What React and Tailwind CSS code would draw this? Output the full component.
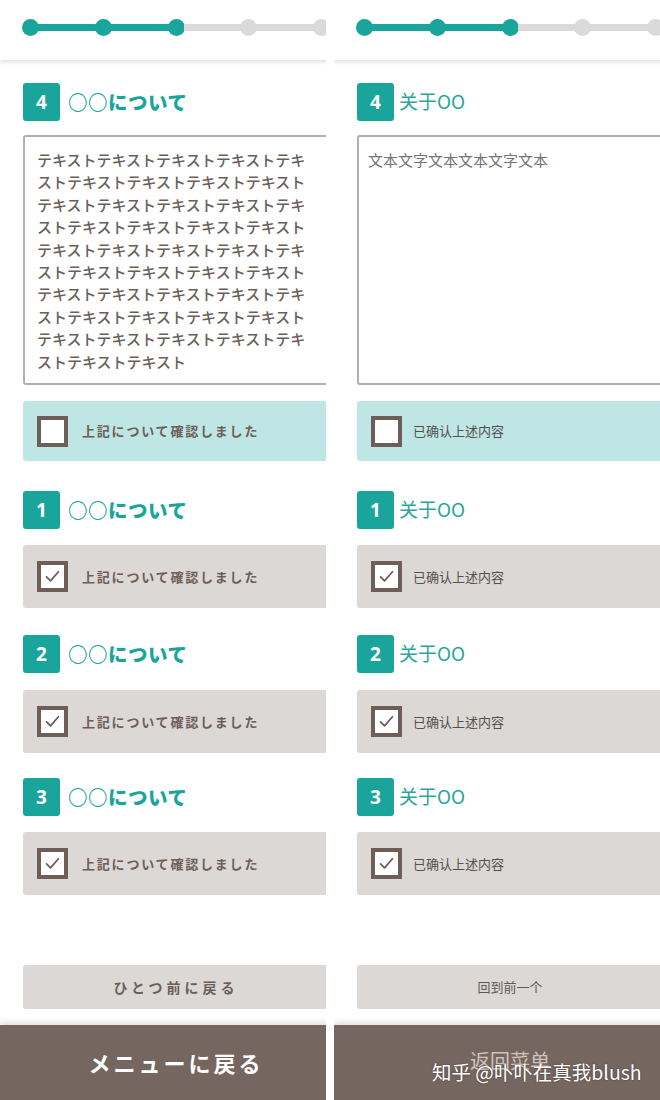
import React from "react";

const JA = {
  font: "font-['Noto_Sans_CJK_JP',sans-serif]",
  title: "○○について",
  body: "テキスト".repeat(43),
  confirm: "上記について確認しました",
  back: "ひとつ前に戻る",
  menu: "メニューに戻る",
};

const ZH = {
  font: "font-['Noto_Sans_CJK_SC',sans-serif]",
  title: "关于OO",
  body: "文本文字文本文本文字文本",
  confirm: "已确认上述内容",
  back: "回到前一个",
  menu: "返回菜单",
};

const Dot = ({ on }) => (
  <div className={`w-[17px] h-[17px] rounded-full shrink-0 ${on ? "bg-[#1aa59c]" : "bg-[#dadada]"}`} />
);

const Seg = ({ on }) => (
  <div className={`flex-1 h-[7px] -mx-px ${on ? "bg-[#1aa59c]" : "bg-[#dadada]"}`} />
);

const Progress = () => (
  <div className="flex items-center">
    <Dot on />
    <Seg on />
    <Dot on />
    <Seg on />
    <Dot on />
    <Seg />
    <Dot />
    <Seg />
    <Dot />
  </div>
);

const Heading = ({ num, text, ja }) => (
  <div className="flex items-center">
    <div className="w-[37px] h-[38px] rounded-[3px] bg-[#1aa59c] flex items-center justify-center text-white text-[19px] font-bold font-['Open_Sans',sans-serif]">
      {num}
    </div>
    {ja ? (
      <span className="ml-[8px] text-[19.5px] font-black tracking-[0.5px] text-[#1aa59c] leading-none">{text}</span>
    ) : (
      <span className="ml-[5px] -mt-[3px] text-[19px] text-[#2aa69c] leading-none">{text}</span>
    )}
  </div>
);

const Checkbox = ({ checked }) => (
  <div className="w-[31px] h-[31px] shrink-0 border-[4px] border-[#6e5e58] bg-white flex items-center justify-center">
    {checked && (
      <svg viewBox="0 0 24 24" className="w-[19px] h-[19px]">
        <path d="M4.5 12.5l5 5L19.5 6" stroke="#6e5e58" strokeWidth="2.2" fill="none" strokeLinecap="round" strokeLinejoin="round" />
      </svg>
    )}
  </div>
);

const ConfirmRow = ({ checked, label, ja, tall }) => (
  <div
    className={`flex items-center pl-[14px] rounded-[3px] ${tall ? "h-[63px]" : "h-[60px]"} ${
      checked ? "bg-[#dcd8d5]" : "bg-[#bde6e5]"
    }`}
  >
    <Checkbox checked={checked} />
    {ja ? (
      <span className="ml-[14px] text-[13px] font-bold tracking-[1.8px] text-[#6e5e58]">{label}</span>
    ) : (
      <span className="ml-[11px] text-[13px] text-[#555050]">{label}</span>
    )}
  </div>
);

const Panel = ({ t, ja }) => (
  <div className={`w-[326px] h-[1100px] overflow-hidden shrink-0 ${t.font}`}>
    <div className="w-[352px] h-full flex flex-col bg-white">
      <header className="h-[60px] pt-[19px] px-[22px] bg-white relative z-10 shadow-[0_2px_4px_rgba(0,0,0,0.13)]">
        <Progress />
      </header>

      <main className="px-[23px] flex flex-col">
        <div className="mt-[23px]">
          <Heading num="4" text={t.title} ja={ja} />
        </div>
        {ja ? (
          <div className="mt-[14px] h-[250px] border-2 border-[#b3aeab] rounded-[3px] px-[12px] pt-[12px]">
            <p className="w-[272px] text-[15px] leading-[22.4px] font-medium text-[#6b5f5a] break-all">{t.body}</p>
          </div>
        ) : (
          <div className="mt-[14px] h-[250px] border-2 border-[#b3aeab] rounded-[3px] px-[9px] pt-[12px]">
            <p className="text-[15px] leading-[22px] text-[#757272]">{t.body}</p>
          </div>
        )}
        <div className="mt-[16px]">
          <ConfirmRow label={t.confirm} ja={ja} />
        </div>

        <div className="mt-[30px]">
          <Heading num="1" text={t.title} ja={ja} />
        </div>
        <div className="mt-[16px]">
          <ConfirmRow checked tall label={t.confirm} ja={ja} />
        </div>

        <div className="mt-[27px]">
          <Heading num="2" text={t.title} ja={ja} />
        </div>
        <div className="mt-[17px]">
          <ConfirmRow checked tall label={t.confirm} ja={ja} />
        </div>

        <div className="mt-[25px]">
          <Heading num="3" text={t.title} ja={ja} />
        </div>
        <div className="mt-[16px]">
          <ConfirmRow checked tall label={t.confirm} ja={ja} />
        </div>

        <button className="mt-[70px] h-[44px] rounded-[3px] bg-[#dcd8d5] flex items-center justify-center">
          {ja ? (
            <span className="text-[14px] font-bold tracking-[4px] text-[#6e5e58]">{t.back}</span>
          ) : (
            <span className="text-[13px] text-[#5f5a58]">{t.back}</span>
          )}
        </button>
      </main>

      <footer className="mt-[16px] flex-1 bg-[#766660] flex items-center justify-center shadow-[0_-3px_6px_rgba(0,0,0,0.12)]">
        {ja ? (
          <span className="text-[22px] font-bold tracking-[3px] text-white">{t.menu}</span>
        ) : (
          <span className="text-[20px] text-[#cdc2bc] -mt-[4px]">{t.menu}</span>
        )}
      </footer>
    </div>
  </div>
);

export default function App() {
  return (
    <div className="relative w-[660px] h-[1100px] overflow-hidden bg-white flex">
      <Panel t={JA} ja />
      <div className="ml-[8px]">
        <Panel t={ZH} />
      </div>
      {/* site watermark stamped over the footer */}
      <span className="absolute left-[432px] top-[1058px] text-[19.5px] leading-[28px] text-white font-['Noto_Sans_CJK_SC',sans-serif] [text-shadow:0_0_2px_rgba(0,0,0,0.45)] whitespace-nowrap">
        知乎 @卟卟在真我blush
      </span>
    </div>
  );
}
